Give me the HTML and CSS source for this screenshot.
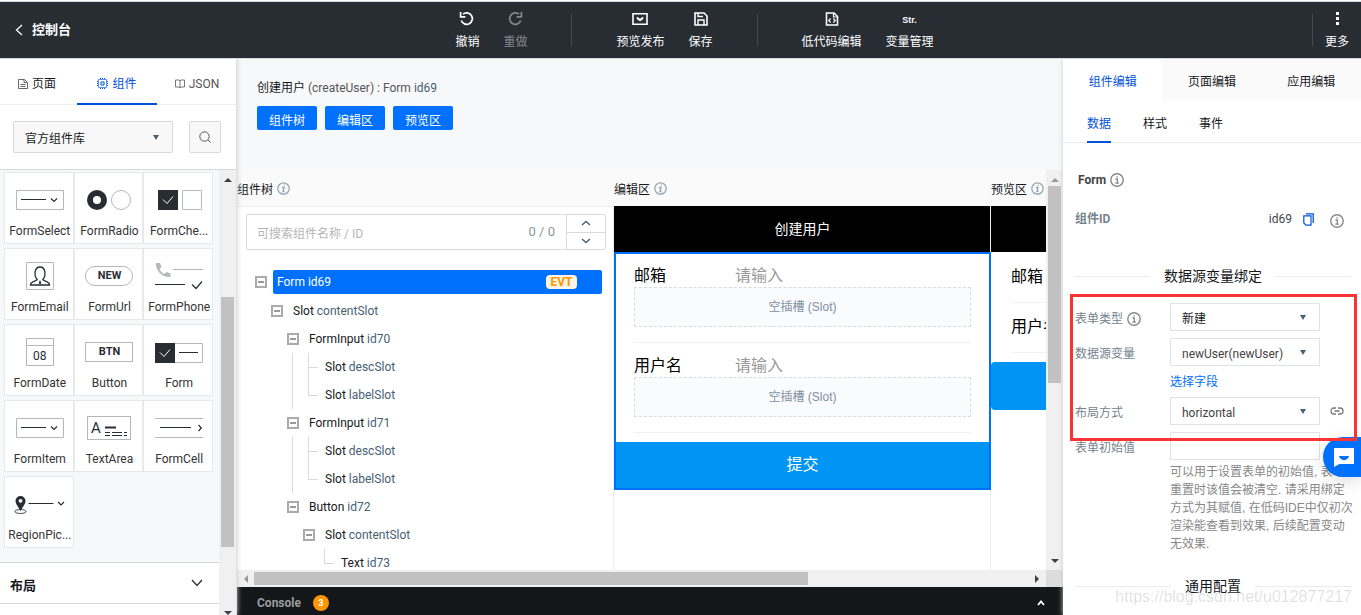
FILE: index.html
```html
<!DOCTYPE html>
<html lang="zh-CN">
<head>
<meta charset="utf-8">
<title>控制台</title>
<link rel="stylesheet" href="styles.css">
</head>
<body>
<svg class="defs" aria-hidden="true">
  <symbol id="info" viewBox="0 0 14 14"><circle cx="7" cy="7" r="6.2" fill="none" stroke="currentColor" stroke-width="1.4"/><path d="M5.5 6h1.8v4M5.3 10.2h3.6M6.4 3.8h1.4" fill="none" stroke="currentColor" stroke-width="1.3"/></symbol>
  <symbol id="info-i" viewBox="0 0 13 13"><circle cx="6.500" cy="6.500" r="5.700" fill="none" stroke="currentColor" stroke-width="1.200"/><path d="M5 5.500h2L6 9.500h1.500M6.800 3.200h1" fill="none" stroke="currentColor" stroke-width="1.300"/></symbol>
  <symbol id="caret" viewBox="0 0 6 5"><path d="M0 0h6L3 5z" fill="#466173"/></symbol>
  <symbol id="up" viewBox="0 0 8 4"><path d="M0 4h8L4 0z" fill="currentColor"/></symbol>
  <symbol id="down" viewBox="0 0 8 4"><path d="M0 0h8L4 4z" fill="currentColor"/></symbol>
  <symbol id="selecticon" viewBox="0 0 48 28"><path d="M.5 4.500h47v19H.5z" fill="#fff" stroke="#b4b7bb"/><path d="M5 13.500h25" stroke="#282c33"/><path d="M35 12.500l3 3 3-3" fill="none" stroke="#282c33" stroke-width="1.200"/></symbol>
</svg>

<header class="topbar">
  <a class="back" href="#"><svg width="8" height="12" viewBox="0 0 8 12"><path d="M7 1L1.500 6 7 11" fill="none" stroke="#fff" stroke-width="1.300"/></svg>控制台</a>
  <nav class="tools">
    <button class="tool"><svg viewBox="0 0 18 18"><path d="M5 4.200A5.700 5.700 0 1 1 3.300 10.500" fill="none" stroke="#fff" stroke-width="1.700"/><path d="M2.600 2v4.800h4.800" fill="none" stroke="#fff" stroke-width="1.700"/></svg>撤销</button>
    <button class="tool off"><svg viewBox="0 0 18 18"><path d="M13 4.200A5.700 5.700 0 1 0 14.700 10.500" fill="none" stroke="#85888c" stroke-width="1.700"/><path d="M15.400 2v4.800h-4.800" fill="none" stroke="#85888c" stroke-width="1.700"/></svg>重做</button>
    <span class="bar"></span>
    <button class="tool"><svg viewBox="0 0 18 18"><path d="M2 3.800h14v10.400H2z" fill="none" stroke="#fff" stroke-width="1.600"/><path d="M6 7l3 2 3-2v2l-3 2-3-2z" fill="#fff" stroke="#fff" stroke-width=".6"/></svg>预览发布</button>
    <button class="tool"><svg viewBox="0 0 18 18"><path d="M3 3h9l3 3v9H3z" fill="none" stroke="#fff" stroke-width="1.600"/><path d="M6 15v-5h6v5M6 3v3.500h5" fill="none" stroke="#fff" stroke-width="1.400"/></svg>保存</button>
    <span class="bar"></span>
    <button class="tool"><svg viewBox="0 0 18 18"><path d="M3.500 3h7.500l3.500 3.500V15h-11z" fill="none" stroke="#fff" stroke-width="1.600"/><path d="M10.500 3v4h4M7.700 8.500L5.700 10.500l2 2M10.300 8.500l2 2-2 2" fill="none" stroke="#fff" stroke-width="1.200"/></svg>低代码编辑</button>
    <button class="tool"><span class="str">Str.</span>变量管理</button>
  </nav>
  <div class="more"><span class="bar"></span><button class="tool"><svg viewBox="0 0 18 18"><path d="M8 2h3v3H8zM8 7h3v3H8zM8 12h3v3H8z" fill="#fff"/></svg>更多</button></div>
</header>

<main class="work">
  <aside class="left">
    <nav class="ltabs">
      <button class="ltab"><svg width="10" height="10" viewBox="0 0 10 10"><path d="M.5.5h6l3 3v6h-9zM2.500 5.500h5M2.500 7.500h5M6 .5v3h3" fill="none" stroke="#666"/></svg>页面</button>
      <button class="ltab on"><svg width="11" height="11" viewBox="0 0 11 11"><path d="M1.500 1.500h8v8h-8z" fill="none" stroke="#5b95ef"/><path d="M4 4h3v3H4z" fill="none" stroke="#0052d9"/><path d="M3.500 0v1M5.500 0v1M7.500 0v1M3.500 10v1M5.500 10v1M7.500 10v1M0 3.500h1M0 5.500h1M0 7.500h1M10 3.500h1M10 5.500h1M10 7.500h1" stroke="#0052d9"/></svg>组件</button>
      <button class="ltab json"><svg width="10" height="10" viewBox="0 0 10 10"><path d="M.5 1h3.500l1 .8 1-.8h3.500v7H6L5 9 4 8H.5zM5 2v6.500" fill="none" stroke="#777"/></svg>JSON</button>
    </nav>
    <div class="pick">
      <label class="sel lib"><select aria-label="组件库"><option>官方组件库</option></select><svg><use href="#caret"/></svg></label>
      <button class="find" aria-label="搜索"><svg width="12" height="12" viewBox="0 0 12 12"><circle cx="5.500" cy="5.500" r="4.700" fill="none" stroke="#555"/><path d="M9 9l2.500 2.500" stroke="#555"/></svg></button>
    </div>
    <div class="lscroll">
      <div class="lib-body">
        <div class="cells">
          <div class="cell"><svg><use href="#selecticon"/></svg>FormSelect</div>
          <div class="cell"><svg viewBox="0 0 48 28"><circle cx="12" cy="14" r="7" fill="#fff" stroke="#282c33" stroke-width="6"/><circle cx="36" cy="14" r="9.500" fill="#fff" stroke="#b4b7bb"/></svg>FormRadio</div>
          <div class="cell"><svg viewBox="0 0 48 28"><path d="M3 4h20v20H3z" fill="#282c33"/><path d="M8 13.500l4 4 6-7" fill="none" stroke="#fff"/><path d="M27.500 4.500h19v19h-19z" fill="#fff" stroke="#b4b7bb"/></svg>FormChe...</div>
          <div class="cell"><svg viewBox="0 0 48 28"><path d="M10.500.5h27v27h-27z" fill="#fff" stroke="#b4b7bb"/><path d="M14.500 23c0-4 6-3.500 6.700-5.500-3-3-3.500-12.500 2.800-12.500s5.800 9.500 2.800 12.500c.7 2 6.700 1.500 6.700 5.500z" fill="none" stroke="#282c33" stroke-width="1.300"/><path d="M24 18l1.300 3-1.300 1.500-1.300-1.500z" fill="#282c33"/></svg>FormEmail</div>
          <div class="cell"><span class="pic pill">NEW</span>FormUrl</div>
          <div class="cell"><svg viewBox="0 0 48 28"><path d="M1 1h4l1.500 4-2 2c1 2.500 2.500 4 5 5l2-2 4 1.500V15C7 15.500.5 9 1 1z" fill="#b4b7bb"/><path d="M18 7.500h30" stroke="#b4b7bb"/><path d="M0 22.500h30" stroke="#282c33"/><path d="M37 22.500l4 4 6-7" fill="none" stroke="#282c33" stroke-width="1.200"/></svg>FormPhone</div>
          <div class="cell"><span class="pic cal">08</span>FormDate</div>
          <div class="cell"><span class="pic btnp">BTN</span>Button</div>
          <div class="cell"><svg viewBox="0 0 48 28"><path d="M.5 5.500h47v19H.5z" fill="#fff" stroke="#b4b7bb"/><path d="M0 5h20v20H0z" fill="#282c33"/><path d="M5 14.500l4 4 6-7" fill="none" stroke="#fff"/><path d="M24 14.500h19" stroke="#282c33"/></svg>Form</div>
          <div class="cell"><svg><use href="#selecticon"/></svg>FormItem</div>
          <div class="cell"><span class="pic area">A<svg viewBox="0 0 24 12"><path d="M1 2.500h11" stroke="#282c33" stroke-width="2"/><path d="M1 7.500h23M1 10.500h23" stroke="#282c33" stroke-dasharray="5 2 10 2 3 2"/></svg></span>TextArea</div>
          <div class="cell"><svg viewBox="0 0 48 28"><path d="M0 4.500h48M0 23.500h48" stroke="#b4b7bb"/><path d="M5 13.500h31M43.500 11l2.800 3-2.800 3" fill="none" stroke="#282c33" stroke-width="1.200"/></svg>FormCell</div>
          <div class="cell"><svg class="region" viewBox="0 0 52 28"><ellipse cx="6.500" cy="21.500" rx="5.500" ry="2" fill="none" stroke="#282c33" stroke-width=".9"/><path d="M6.500 21C4 16.500 1.500 14 1.500 11a5 5 0 0 1 10 0c0 3-2.500 5.500-5 10z" fill="#282c33"/><circle cx="6.500" cy="10.800" r="1.900" fill="#fff"/><path d="M14.500 13.500h25M44 12l3 3 3-3" fill="none" stroke="#282c33" stroke-width="1.200"/></svg>RegionPic...</div>
        </div>
        <button class="fold">布局<svg width="12" height="8" viewBox="0 0 12 8"><path d="M1 1l5 5.500L11 1" fill="none" stroke="#333" stroke-width="1.400"/></svg></button>
      </div>
      <div class="vbar l"><svg><use href="#up"/></svg><div class="rail"><i class="before"></i><i class="thumb"></i><i class="after"></i></div><svg><use href="#down"/></svg></div>
    </div>
  </aside>

  <section class="center">
    <div class="intro">
      <h1>创建用户 <span>(createUser) : Form <em>id69</em></span></h1>
      <div class="jump"><button>组件树</button><button>编辑区</button><button>预览区</button></div>
    </div>
    <div class="stage">
      <div class="columns">
        <section class="col">
          <h2>组件树<svg><use href="#info-i"/></svg></h2>
          <div class="tree">
            <div class="search">
              <input type="text" aria-label="搜索组件" placeholder="可搜索组件名称 / ID"><span>0 / 0</span>
              <div class="steps"><button aria-label="上一个"><svg viewBox="0 0 10 6"><path d="M1 5l4-3.500L9 5" fill="none" stroke="#466173" stroke-width="1.400"/></svg></button><button aria-label="下一个"><svg viewBox="0 0 10 6"><path d="M1 1l4 3.500L9 1" fill="none" stroke="#466173" stroke-width="1.400"/></svg></button></div>
            </div>
            <ul class="nodes">
              <li><div class="node"><i class="tog"></i><span class="name picked">Form id69<b>EVT</b></span></div>
                <ul class="first">
                  <li><div class="node"><i class="tog"></i><span class="name">Slot <em>contentSlot</em></span></div>
                    <ul>
                      <li><div class="node"><i class="tog"></i><span class="name">FormInput <em>id70</em></span></div>
                        <ul class="lined">
                          <li><div class="node"><i class="tee"></i><span class="name">Slot <em>descSlot</em></span></div></li>
                          <li><div class="node"><i class="elbow"></i><span class="name">Slot <em>labelSlot</em></span></div></li>
                        </ul></li>
                      <li><div class="node"><i class="tog"></i><span class="name">FormInput <em>id71</em></span></div>
                        <ul class="lined">
                          <li><div class="node"><i class="tee"></i><span class="name">Slot <em>descSlot</em></span></div></li>
                          <li><div class="node"><i class="elbow"></i><span class="name">Slot <em>labelSlot</em></span></div></li>
                        </ul></li>
                      <li><div class="node"><i class="tog"></i><span class="name">Button <em>id72</em></span></div>
                        <ul>
                          <li><div class="node"><i class="tog"></i><span class="name">Slot <em>contentSlot</em></span></div>
                            <ul><li><div class="node"><i class="elbow"></i><span class="name">Text <em>id73</em></span></div></li></ul></li>
                        </ul></li>
                    </ul></li>
                </ul></li>
            </ul>
          </div>
        </section>
        <section class="col">
          <h2>编辑区<svg><use href="#info-i"/></svg></h2>
          <div class="page">
            <div class="ptitle">创建用户</div>
            <form class="pform">
              <div class="item"><div class="field"><label for="mail">邮箱</label><input id="mail" placeholder="请输入"></div><div class="slot">空插槽 (Slot)</div></div>
              <div class="item"><div class="field"><label for="user">用户名</label><input id="user" placeholder="请输入"></div><div class="slot">空插槽 (Slot)</div></div>
              <button type="button" class="submit">提交</button>
            </form>
          </div>
        </section>
        <section class="col">
          <h2>预览区<svg><use href="#info-i"/></svg></h2>
          <div class="page">
            <div class="ptitle"></div>
            <form class="preview">
              <div class="field"><label for="pmail">邮箱</label><input id="pmail"></div>
              <div class="field"><label for="puser">用户名</label><input id="puser"></div>
              <button type="button" class="psubmit" aria-label="提交"></button>
            </form>
          </div>
        </section>
      </div>
      <div class="vbar c"><svg class="dim"><use href="#up"/></svg><div class="rail"><i class="thumb"></i><i class="after"></i></div><svg><use href="#down"/></svg></div>
      <div class="hbar"><svg class="dim" viewBox="0 0 4 8"><path d="M4 0v8L0 4z" fill="currentColor"/></svg><div class="rail"><i class="thumb"></i><i class="after"></i></div><svg viewBox="0 0 4 8"><path d="M0 0v8l4-4z" fill="currentColor"/></svg></div>
      <div class="corner"></div>
    </div>
    <div class="console">Console<span>3</span><svg width="8" height="6" viewBox="0 0 8 6"><path d="M1 5l3-3.500L7 5" fill="none" stroke="#fff" stroke-width="1.800"/></svg></div>
  </section>

  <aside class="right">
    <nav class="rtabs"><button class="on">组件编辑</button><button>页面编辑</button><button>应用编辑</button></nav>
    <nav class="subs"><button class="on">数据</button><button>样式</button><button>事件</button></nav>
    <div class="props">
      <h3>Form<svg><use href="#info"/></svg></h3>
      <div class="ident"><strong>组件ID</strong><span>id69</span><svg width="11" height="13" viewBox="0 0 11 13"><path d="M3 .8h7.200V10" fill="none" stroke="#0052d9" stroke-width="1.300"/><path d="M.8 2.800H8v9.400H3L.8 10z" fill="none" stroke="#0052d9" stroke-width="1.200"/></svg><svg class="i"><use href="#info"/></svg></div>
      <div class="split">数据源变量绑定</div>
      <div class="rows">
        <div class="row"><label for="type">表单类型<svg><use href="#info"/></svg></label><span class="sel"><select id="type"><option>新建</option></select><svg><use href="#caret"/></svg></span></div>
        <div class="row"><label for="src">数据源变量</label><span class="sel"><select id="src" class="soft"><option>newUser(newUser)</option></select><svg><use href="#caret"/></svg></span></div>
        <div class="row link"><a href="#">选择字段</a></div>
        <div class="row"><label for="lay">布局方式</label><span class="sel"><select id="lay" class="soft"><option>horizontal</option></select><svg><use href="#caret"/></svg></span><svg class="chain" viewBox="0 0 14 8"><path d="M6 1H4a3 3 0 0 0 0 6h2M8 1h2a3 3 0 0 1 0 6H8M4.500 4h5" fill="none" stroke="#777" stroke-width="1.300"/></svg></div>
        <div class="row"><label for="init">表单初始值</label><input id="init" type="text"></div>
        <p class="help">可以用于设置表单的初始值, 表单重置时该值会被清空. 请采用绑定方式为其赋值, 在低码IDE中仅初次渲染能查看到效果, 后续配置变动无效果.</p>
      </div>
      <div class="split last">通用配置</div>
    </div>
    <button class="chat" aria-label="客服"><svg width="20" height="19" viewBox="0 0 20 19"><path d="M0 0h20v16H5.500L0 19z" fill="#fff"/><path d="M5 8h10c-1 5.500-9 5.500-10 0z" fill="#0070ff"/></svg></button>
    <div class="mark"></div>
    <div class="watermark">https://blog.csdn.net/u012877217</div>
  </aside>
</main>
</body>
</html>
```
FILE: styles.css
```css
* { box-sizing: border-box; }
body {
  margin: 0;
  height: 100vh;
  display: flex;
  flex-direction: column;
  overflow: hidden;
  font: 12px/18px Roboto, "Noto Sans CJK SC", sans-serif;
  color: #16181c;
  background: #fff;
}
button, input, select { font: inherit; color: inherit; border: 0; padding: 0; margin: 0; background: none; border-radius: 0; min-width: 0; }
h1, h2, h3, p, ul { margin: 0; padding: 0; font-size: 12px; font-weight: 400; list-style: none; }
em { font-style: normal; color: #466173; }
.defs { display: none; }

.topbar { flex: none; position: relative; z-index: 2; display: flex; height: 58px; margin-top: 1px; border-top: 1px solid #d5dbe1; border-bottom: 1px solid #d5d8dc; background: #282c33; color: #fff; }
.back { flex: none; width: 77px; padding-left: 15px; display: flex; align-items: center; gap: 9px; color: #fff; text-decoration: none; font-size: 13px; font-weight: 700; white-space: nowrap; }
.tools { flex: 1; display: flex; justify-content: center; }
.tool { display: flex; flex-direction: column; align-items: center; gap: 5px; padding: 8px 12px 0; line-height: 18px; white-space: nowrap; align-self: flex-start; }
.tool svg { width: 18px; height: 18px; }
.tool.off { color: #85888c; }
.str { height: 18px; font: 700 9px/20px "Liberation Sans", sans-serif; }
.bar { width: 1px; height: 32px; margin: 12px 32px 0; background: #44484e; }
.more { flex: none; width: 49px; display: flex; }
.more .bar { margin: 12px 0 0; }

.work { flex: 1; min-height: 0; display: flex; }
.left { flex: none; width: 237px; display: flex; flex-direction: column; border-right: 1px solid #e0e1e3; box-shadow: 0 0 5px #ccc; z-index: 1; background: #fff; }
.ltabs { flex: none; display: flex; justify-content: flex-end; height: 46px; margin-right: -1px; border-bottom: 1px solid #eceef0; }
.ltab { flex: none; width: 80px; height: 46px; display: flex; align-items: center; justify-content: center; gap: 4px; padding-top: 5px; border-bottom: 2px solid transparent; }
.ltab.on { color: #0052d9; border-color: #0052d9; }
.ltab.json { color: #555; }
.pick { flex: none; display: flex; gap: 16px; padding: 16px 15px 16px 13px; border-bottom: 1px solid #d5d8dc; }
.sel { display: grid; align-items: center; }
.sel select, .sel svg { grid-area: 1 / 1; }
.sel select { appearance: none; width: 100%; height: 28px; padding: 4px 24px 0 11px; border: 1px solid #dfe2e6; background: #fff; }
.sel .soft { color: #444; }
.sel svg { justify-self: end; width: 6px; height: 5px; margin-right: 14px; pointer-events: none; }
.sel.lib { flex: 1; }
.sel.lib select { height: 32px; background: #f8f8f8; border-color: #d5d7da; border-radius: 2px; }
.find { width: 32px; height: 32px; display: grid; place-items: center; border: 1px solid #d8dadd; background: #f8f8f8; border-radius: 2px; }
.lscroll { flex: 1; min-height: 0; display: flex; }
.lib-body { flex: 1; background: #f7f8fa; overflow: hidden; }
.cells { display: grid; grid-template-columns: repeat(3, 1fr); row-gap: 4px; padding: 2px 6px 14px 4px; }
.cell { height: 72px; min-width: 0; padding: 13px 0 0 2px; display: flex; flex-direction: column; align-items: center; gap: 8px; background: #fff; border: 1px solid #e8e9eb; color: #333; white-space: nowrap; }
.cell > svg { flex: none; width: 48px; height: 28px; }
.cell > .region { width: 52px; }
.pic { flex: none; display: flex; align-items: center; justify-content: center; border: 1px solid #b4b7bb; color: #282c33; font: 700 11px/18px Roboto, sans-serif; }
.pill, .btnp { width: 48px; height: 20px; margin: 4px 0; }
.pill { border-radius: 10px; }
.cal { width: 28px; height: 28px; padding-top: 8px; font-weight: 400; font-size: 12px; background: linear-gradient(#b4b7bb, #b4b7bb) 0 6px / 100% 1px no-repeat; }
.area { width: 44px; height: 24px; margin: 2px 0; gap: 3px; font-size: 15px; font-weight: 400; }
.area svg { width: 24px; height: 12px; margin-top: 5px; }
.fold { width: 100%; height: 42px; display: flex; align-items: center; justify-content: space-between; padding: 5px 16px 0 10px; border-top: 1px solid #d5d8dc; border-bottom: 1px solid #d5d8dc; background: #fff; font-weight: 700; font-size: 13px; box-shadow: 0 12px #fff; }
.fold svg { margin-bottom: 6px; }
.vbar { flex: none; width: 17px; display: flex; flex-direction: column; align-items: center; padding: 8px 0 0; background: #f0f0f0; color: #404040; }
.vbar svg { flex: none; width: 8px; height: 4px; }
.rail { display: flex; flex: 1; }
.vbar .rail { flex-direction: column; width: 13px; margin: 4px 0; }
.thumb { background: #c1c1c1; }
.dim { color: #999; }
.l .before { flex: 111; }
.l .thumb { flex: 250; }
.l .after { flex: 60; }

.center { flex: 1; min-width: 0; display: flex; flex-direction: column; background: #f7f8fa; }
.intro { flex: none; height: 111px; padding: 20px 20px 0; }
.intro span { color: #555; }
.jump { display: flex; gap: 8px; padding-top: 9px; }
.jump button { width: 60px; height: 24px; padding-top: 5px; border-radius: 2px; background: #0070ff; color: #fff; }
.stage { flex: 1; min-height: 0; display: grid; grid-template: minmax(0, 1fr) 17px / minmax(0, 1fr) 17px; }
.columns { display: flex; overflow: hidden; background: #fff; }
.col { flex: none; width: 377px; display: flex; flex-direction: column; }
.col h2 { flex: none; height: 36px; display: flex; align-items: center; gap: 4px; padding-top: 3px; background: #fafafa; }
.col h2 svg { width: 13px; height: 13px; margin-bottom: 3px; color: #91a4b2; }
.tree { padding: 7px 7px 0 9px; border-top: 1px solid #eceef0; border-right: 1px solid #eceef0; flex: 1; min-height: 0; }
.search { display: flex; align-items: center; height: 36px; border: 1px solid #dadbdd; border-radius: 2px; }
.search input { flex: 1; height: 34px; padding: 3px 0 0 10px; outline: 0; }
.search input::placeholder { color: #b5b5b5; opacity: 1; }
.search span { color: #8795a1; padding-right: 11px; font-size: 13px; }
.steps { width: 39px; align-self: stretch; display: flex; flex-direction: column; border-left: 1px solid #dadbdd; }
.steps button { flex: 1; display: grid; place-items: center; }
.steps button + button { border-top: 1px solid #dadbdd; }
.steps svg { width: 10px; height: 6px; }
.nodes { padding: 18px 4px 0 9px; }
.nodes ul { padding-left: 16px; }
.nodes .first { padding-top: 1px; }
.nodes .lined { background: linear-gradient(#d9d9d9, #d9d9d9) 5px 0 / 1px 100% no-repeat; }
.node { display: flex; align-items: center; gap: 6px; height: 28px; }
.node > i { flex: none; width: 12px; height: 12px; }
.tog { border: 2px solid #aaa; background: linear-gradient(#999, #999) center / 6px 2px no-repeat; }
.node .tee, .node .elbow { height: 28px; width: 16px; margin-right: -4px; background: linear-gradient(#d9d9d9, #d9d9d9) 5px 0 / 1px 100% no-repeat, linear-gradient(#d9d9d9, #d9d9d9) 5px 14px / 10px 1px no-repeat; }
.node .elbow { background-size: 1px 14px, 10px 1px; }
.name { flex: 1; height: 24px; display: flex; align-items: center; padding: 0 25px 0 4px; white-space: pre; border-radius: 2px; }
.picked { background: #0070ff; color: #fff; }
.picked b { margin-left: auto; width: 31px; height: 14px; border-radius: 4px; background: #fff5e6; color: #ff9500; font-size: 12px; line-height: 14px; text-align: center; }
.page { flex: 1; font-size: 16px; color: #000; }
.col + .col + .col .page { border-left: 1px solid #eceef0; margin-left: -1px; }
.ptitle { height: 46px; background: #000; color: #fff; font-size: 14px; line-height: 46px; text-align: center; }
.pform { padding: 1px 0 2px; outline: 2px solid #0070ff; outline-offset: -2px; position: relative; }
.item { margin: 0 20px; padding: 12px 0 15px; border-bottom: 1px solid #f0f1f2; }
.field { display: flex; line-height: 22px; }
.field label { flex: none; width: 101px; }
.field input { flex: 1; height: 22px; }
.field input::placeholder { color: #999; opacity: 1; }
.slot { height: 40px; border: 1px dashed #d9dce0; background: #fafbfd; color: #8090a2; font: 12px/38px "Liberation Sans", "Noto Sans CJK SC", sans-serif; text-align: center; }
.submit { display: block; width: 100%; height: 46px; margin-top: 9px; background: #0094f5; color: #fff; font-size: 16px; }
.preview .field { margin: 0 20px; padding: 13px 0 14px; border-bottom: 1px solid #f0f1f2; }
.preview { padding-top: 1px; }
.psubmit { width: 100%; height: 48px; margin-top: 9px; border-radius: 4px; background: #0094f5; display: block; }
.c .thumb { flex: 195; }
.c .after { flex: 170; }
.c { padding-bottom: 7px; }
.hbar { display: flex; align-items: center; padding: 0 7px; background: #f0f0f0; color: #404040; }
.hbar svg { width: 4px; height: 8px; }
.hbar .rail { height: 13px; margin: 0 6px; }
.hbar .thumb { flex: 554; }
.hbar .after { flex: 221; }
.corner { background: #dcdcdc; }
.console { flex: none; height: 28px; display: flex; align-items: center; gap: 12px; padding: 3px 18px 0 20px; background: #14171a; color: #9b9c9e; font-weight: 700; }
.console span { width: 16px; height: 16px; border-radius: 8px; background: #ff9500; color: #fff; font-size: 9px; line-height: 16px; text-align: center; }
.console svg { margin-left: auto; }

.right { flex: none; width: 298px; position: relative; display: flex; flex-direction: column; background: #fff; box-shadow: 0 0 5px #ccc; }
.rtabs { flex: none; display: flex; height: 42px; }
.rtabs button { flex: 1; background: #fafafa; padding-top: 4px; }
.rtabs .on { background: #fff; color: #0052d9; }
.subs { flex: none; display: flex; gap: 32px; height: 42px; padding-left: 24px; border-bottom: 1px solid #e9ebed; }
.subs button { height: 42px; padding-top: 5px; border-bottom: 2px solid transparent; }
.subs .on { color: #0052d9; border-color: #0052d9; }
.props { flex: 1; min-height: 0; overflow: hidden; padding: 28px 10px 0 12px; }
.props h3 { display: flex; align-items: center; gap: 4px; padding-left: 3px; font-weight: 700; color: #444; }
.props h3 svg, .row label svg, .ident .i { width: 14px; height: 14px; color: #888; }
.ident { display: flex; align-items: center; padding: 21px 7px 0 0; color: #444; }
.ident strong { flex: 1; color: #76828e; }
.ident span { margin-right: 11px; }
.ident .i { margin: 4px 0 0 16px; }
.split { display: flex; align-items: center; gap: 14px; padding-top: 38px; font-size: 14px; line-height: 20px; }
.split::before, .split::after { content: ""; flex: 1; height: 1px; background: #e9ebed; }
.rows { padding-top: 17px; }
.row { display: grid; grid-template-columns: 95px 150px auto; align-items: center; margin-bottom: 7px; }
.row label { display: flex; align-items: center; gap: 4px; padding-top: 4px; color: #76828e; }
.row input { height: 28px; border: 1px solid #dfe2e6; padding: 0 10px; }
.row.link { margin-bottom: 6px; }
.row.link a { grid-column: 2; color: #0070ff; text-decoration: none; }
.chain { width: 14px; height: 8px; margin-left: 10px; }
.help { margin: -4px -4px 0 95px; color: #888; font-family: "Liberation Sans", "Noto Sans CJK SC", sans-serif; line-height: 18px; }
.split.last { padding-top: 23px; }
.mark { position: absolute; left: 7px; right: 4px; top: 235px; height: 147px; border: 3px solid #fa3434; pointer-events: none; }
.chat { position: absolute; right: 0; top: 378px; width: 38px; height: 40px; padding-left: 4px; border-radius: 20px 0 0 20px; background: #0070ff; box-shadow: 0 4px 16px #0002; display: grid; place-items: center; }
.watermark { position: absolute; right: 9px; bottom: 9px; font: 16px/18px "Liberation Sans", sans-serif; color: #0002; pointer-events: none; }
```
